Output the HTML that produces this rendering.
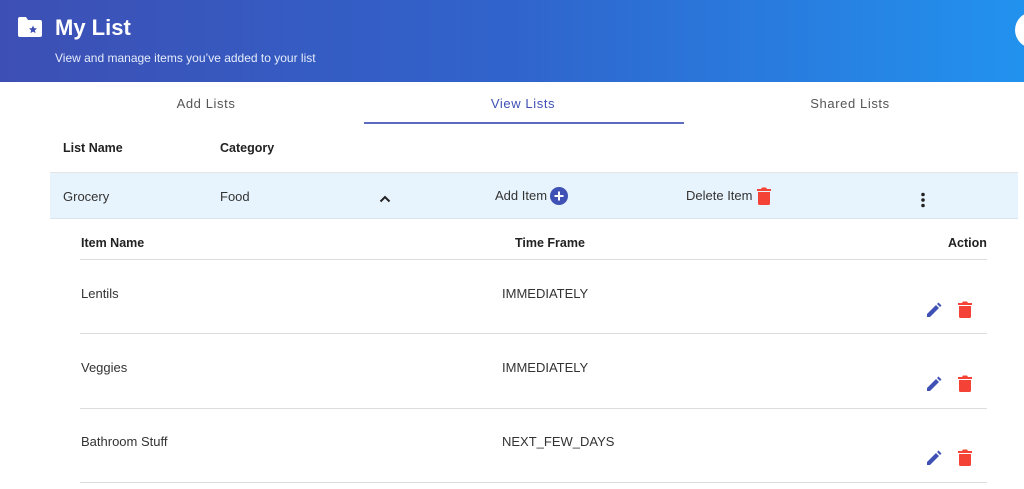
<!DOCTYPE html>
<html><head><style>
body{margin:0;width:1024px;height:489px;overflow:hidden;background:#fff;font-family:"Liberation Sans",sans-serif;position:relative}
.hdr{position:absolute;left:0;top:0;width:1024px;height:82px;background:linear-gradient(90deg,#3d4fb4,#3064cc 50%,#2292ef);overflow:hidden}
.hdr h1{position:absolute;left:55px;top:15px;margin:0;color:#fff;font-size:22px;font-weight:bold}
.hdr p{position:absolute;left:55px;top:51px;margin:0;color:#e6ecfa;font-size:12px}
.circ{position:absolute;left:1015px;top:12px;width:36px;height:36px;border-radius:50%;background:#fff}
.t{position:absolute;font-size:13px;color:#333;white-space:nowrap}
.tab{position:absolute;top:96px;font-size:13px;color:#555;letter-spacing:.6px;transform:translateX(-50%)}
.b{font-weight:bold;font-size:12.5px;color:#222}
.line{position:absolute;left:80px;width:907px;height:1px;background:#ddd}
</style></head><body>
<div class="hdr">
<svg style="position:absolute;left:18px;top:17px" width="24" height="20" viewBox="0 0 24 20"><path d="M0 2Q0 0 2 0H8L10 3H22Q24 3 24 5V18Q24 20 22 20H2Q0 20 0 18Z" fill="#fff"/><path d="M15 8.5l1.2 2.6 2.8.3-2.1 1.9.6 2.8-2.5-1.5-2.5 1.5.6-2.8-2.1-1.9 2.8-.3z" fill="#3d4fb4"/></svg>
<h1>My List</h1><p>View and manage items you’ve added to your list</p><div class="circ"></div></div>
<div class="tab" style="left:206px">Add Lists</div>
<div class="tab" style="left:523px;color:#3f51b5">View Lists</div>
<div class="tab" style="left:850px">Shared Lists</div>
<div style="position:absolute;left:364px;top:122px;width:320px;height:2px;background:#5c6bc0"></div>
<div class="t b" style="left:63px;top:141px">List Name</div>
<div class="t b" style="left:220px;top:141px">Category</div>
<div style="position:absolute;left:50px;top:172px;width:968px;height:1px;background:#e4e4e4"></div>
<div style="position:absolute;left:50px;top:173px;width:968px;height:45px;background:#e8f4fd;border-bottom:1px solid #d8e4ee"></div>
<div class="t" style="left:63px;top:189px">Grocery</div>
<div class="t" style="left:220px;top:189px">Food</div>
<svg style="position:absolute;left:379px;top:195px" width="12" height="8" viewBox="0 0 12 8"><path d="M1.5 6.5L6 2l4.5 4.5" stroke="#222" stroke-width="2" fill="none"/></svg>
<div class="t" style="left:495px;top:188px">Add Item</div>
<svg style="position:absolute;left:550px;top:187px" width="18" height="18" viewBox="0 0 18 18"><circle cx="9" cy="9" r="9" fill="#3f51b5"/><path d="M9 4.5v9M4.5 9h9" stroke="#fff" stroke-width="2"/></svg>
<div class="t" style="left:686px;top:188px">Delete Item</div>
<svg style="position:absolute;left:757px;top:187px" width="14" height="18" viewBox="0 0 14 18"><path d="M0 2h4l1-1.5h4L10 2h4v2H0zM1 5h12v11.5q0 1.5-1.5 1.5h-9Q1 18 1 16.5z" fill="#f44336"/></svg>
<svg style="position:absolute;left:920px;top:192px" width="6" height="16" viewBox="0 0 6 16"><circle cx="3" cy="2.5" r="1.8" fill="#222"/><circle cx="3" cy="8" r="1.8" fill="#222"/><circle cx="3" cy="13.5" r="1.8" fill="#222"/></svg>
<div class="t b" style="left:81px;top:236px">Item Name</div>
<div class="t b" style="left:515px;top:236px">Time Frame</div>
<div class="t b" style="left:948px;top:236px">Action</div>
<div class="line" style="top:259px"></div>
<div class="line" style="top:333px"></div>
<div class="line" style="top:408px"></div>
<div class="line" style="top:482px"></div>
<div class="t" style="left:81px;top:286px">Lentils</div><div class="t" style="left:502px;top:286px">IMMEDIATELY</div>
<div class="t" style="left:81px;top:360px">Veggies</div><div class="t" style="left:502px;top:360px">IMMEDIATELY</div>
<div class="t" style="left:81px;top:434px">Bathroom Stuff</div><div class="t" style="left:502px;top:434px">NEXT_FEW_DAYS</div>
<svg width="0" height="0" style="position:absolute"><defs>
<g id="ic"><path d="M2 15l0-3 9-9 3 3-9 9z M12 2l1.5-1.5 3 3L15 5z" fill="#3f51b5" transform="translate(0,1)"/><path d="M33 2h4l1-1.5h4L43 2h4v2H33zM34 5h12v10.5q0 1.5-1.5 1.5h-9Q34 17 34 15.5z" fill="#f44336"/></g></defs></svg>
<svg style="position:absolute;left:925px;top:301px" width="50" height="20"><use href="#ic"/></svg>
<svg style="position:absolute;left:925px;top:375px" width="50" height="20"><use href="#ic"/></svg>
<svg style="position:absolute;left:925px;top:449px" width="50" height="20"><use href="#ic"/></svg>
</body></html>
